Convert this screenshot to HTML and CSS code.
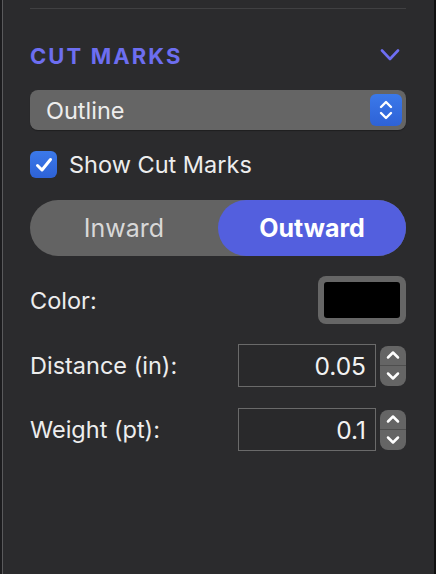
FILE: index.html
```html
<!DOCTYPE html>
<html>
<head>
<meta charset="utf-8">
<link rel="stylesheet" href="styles.css">
</head>
<body>
<div class="frame">
  <div class="panel">
    <div class="divider"></div>
    <div class="header">
      <span class="title">CUT MARKS</span>
      <svg class="chev" width="20" height="12" viewBox="0 0 20 12"><path d="M2 1.5 L10 10 L18 1.5" fill="none" stroke="#6e6ef2" stroke-width="2.6" stroke-linecap="round" stroke-linejoin="round"/></svg>
    </div>
    <div class="select">
      <span class="select-text">Outline</span>
      <span class="select-btn">
        <svg width="16" height="24" viewBox="0 0 16 24"><path d="M3 9 L8 4 L13 9" fill="none" stroke="#fff" stroke-width="2.4" stroke-linecap="round" stroke-linejoin="round"/><path d="M3 15 L8 20 L13 15" fill="none" stroke="#fff" stroke-width="2.4" stroke-linecap="round" stroke-linejoin="round"/></svg>
      </span>
    </div>
    <div class="check-row">
      <span class="checkbox">
        <svg width="18" height="16" viewBox="0 0 18 16"><path d="M2.5 8.5 L7 13 L15.5 2.5" fill="none" stroke="#fff" stroke-width="3" stroke-linecap="round" stroke-linejoin="round"/></svg>
      </span>
      <span class="check-label">Show Cut Marks</span>
    </div>
    <div class="segmented">
      <span class="seg">Inward</span>
      <span class="seg active">Outward</span>
    </div>
    <div class="row color-row">
      <span class="label">Color:</span>
      <span class="well"><span class="well-inner"></span></span>
    </div>
    <div class="row num-row">
      <span class="label">Distance (in):</span>
      <span class="num-group">
        <span class="num-input">0.05</span>
        <span class="stepper">
          <span class="step"><svg width="16" height="12" viewBox="0 0 16 12"><path d="M3 8.5 L8 3.5 L13 8.5" fill="none" stroke="#fff" stroke-width="2.5" stroke-linecap="round" stroke-linejoin="round"/></svg></span>
          <span class="step bottom"><svg width="16" height="12" viewBox="0 0 16 12"><path d="M3 3.5 L8 8.5 L13 3.5" fill="none" stroke="#fff" stroke-width="2.5" stroke-linecap="round" stroke-linejoin="round"/></svg></span>
        </span>
      </span>
    </div>
    <div class="row num-row">
      <span class="label">Weight (pt):</span>
      <span class="num-group">
        <span class="num-input">0.1</span>
        <span class="stepper">
          <span class="step"><svg width="16" height="12" viewBox="0 0 16 12"><path d="M3 8.5 L8 3.5 L13 8.5" fill="none" stroke="#fff" stroke-width="2.5" stroke-linecap="round" stroke-linejoin="round"/></svg></span>
          <span class="step bottom"><svg width="16" height="12" viewBox="0 0 16 12"><path d="M3 3.5 L8 8.5 L13 3.5" fill="none" stroke="#fff" stroke-width="2.5" stroke-linecap="round" stroke-linejoin="round"/></svg></span>
        </span>
      </span>
    </div>
  </div>
</div>
</body>
</html>
```
FILE: styles.css
```css
* { box-sizing: border-box; }
html, body {
  margin: 0;
  padding: 0;
  width: 436px;
  height: 574px;
  overflow: hidden;
  background: #2b2b2d;
  font-family: Inter, "Noto Sans", sans-serif;
  color: #e6e6e6;
}
.frame {
  width: 436px;
  height: 574px;
  background: #2b2b2d;
  border-left: 2px solid #1c1c1e;
  border-right: 2px solid #111;
  display: flex;
}
.panel {
  flex: 1;
  border-left: 1px solid #5a5a5c;
  padding: 8px 28px 0 27px;
  display: flex;
  flex-direction: column;
}
.divider {
  height: 1px;
  background: #404042;
}
.header {
  margin-top: 34px;
  height: 26px;
  display: flex;
  align-items: center;
  justify-content: space-between;
  padding-right: 6px;
}
.chev {
  margin-top: -3px;
}
.title {
  font-weight: 700;
  font-size: 22px;
  letter-spacing: 2.1px;
  color: #6d6ef0;
}
.select {
  margin-top: 21px;
  height: 40px;
  background: #656565;
  border-radius: 8px;
  display: flex;
  align-items: center;
  justify-content: space-between;
  padding: 0 4px 0 16px;
  box-shadow: 0 1px 1px rgba(0,0,0,0.3);
}
.select-text {
  font-size: 23.5px;
  color: #ededed;
}
.select-btn {
  width: 32px;
  height: 32px;
  border-radius: 6px;
  background: linear-gradient(#3b79ea, #2e62d6);
  display: flex;
  align-items: center;
  justify-content: center;
}
.check-row {
  margin-top: 21px;
  height: 27px;
  display: flex;
  align-items: center;
  gap: 12px;
}
.checkbox {
  width: 27px;
  height: 27px;
  border-radius: 6px;
  background: linear-gradient(#3b79ea, #2e62d6);
  display: flex;
  align-items: center;
  justify-content: center;
}
.check-label {
  font-size: 23.5px;
  color: #ededed;
}
.segmented {
  margin-top: 22px;
  height: 56px;
  border-radius: 28px;
  background: #636363;
  display: flex;
}
.seg {
  flex: 1;
  display: flex;
  align-items: center;
  justify-content: center;
  font-size: 25px;
  color: #d8d8d8;
  border-radius: 28px;
}
.seg.active {
  background: #535fde;
  color: #fff;
  font-weight: 700;
}
.row {
  display: flex;
  align-items: center;
  justify-content: space-between;
}
.label {
  font-size: 23.5px;
  color: #ededed;
}
.color-row {
  margin-top: 20px;
  height: 48px;
}
.well {
  width: 88px;
  height: 48px;
  border-radius: 8px;
  background: #666;
  padding: 6px;
  display: flex;
}
.well-inner {
  flex: 1;
  background: #000;
  border-radius: 3px;
}
.num-row {
  margin-top: 20px;
  height: 43px;
}
.num-row + .num-row {
  margin-top: 21px;
}
.num-group {
  display: flex;
  align-items: center;
  gap: 4px;
}
.num-input {
  width: 138px;
  height: 43px;
  border: 1px solid #6a6a6a;
  background: #29292b;
  font-size: 24.5px;
  color: #f2f2f2;
  display: flex;
  align-items: center;
  justify-content: flex-end;
  padding-right: 9px;
}
.stepper {
  width: 26px;
  height: 40px;
  border-radius: 8px;
  background: #656565;
  display: flex;
  flex-direction: column;
  overflow: hidden;
}
.step {
  flex: 1;
  display: flex;
  align-items: center;
  justify-content: center;
}
.step.bottom {
  border-top: 1px solid #4e4e4e;
}
```
